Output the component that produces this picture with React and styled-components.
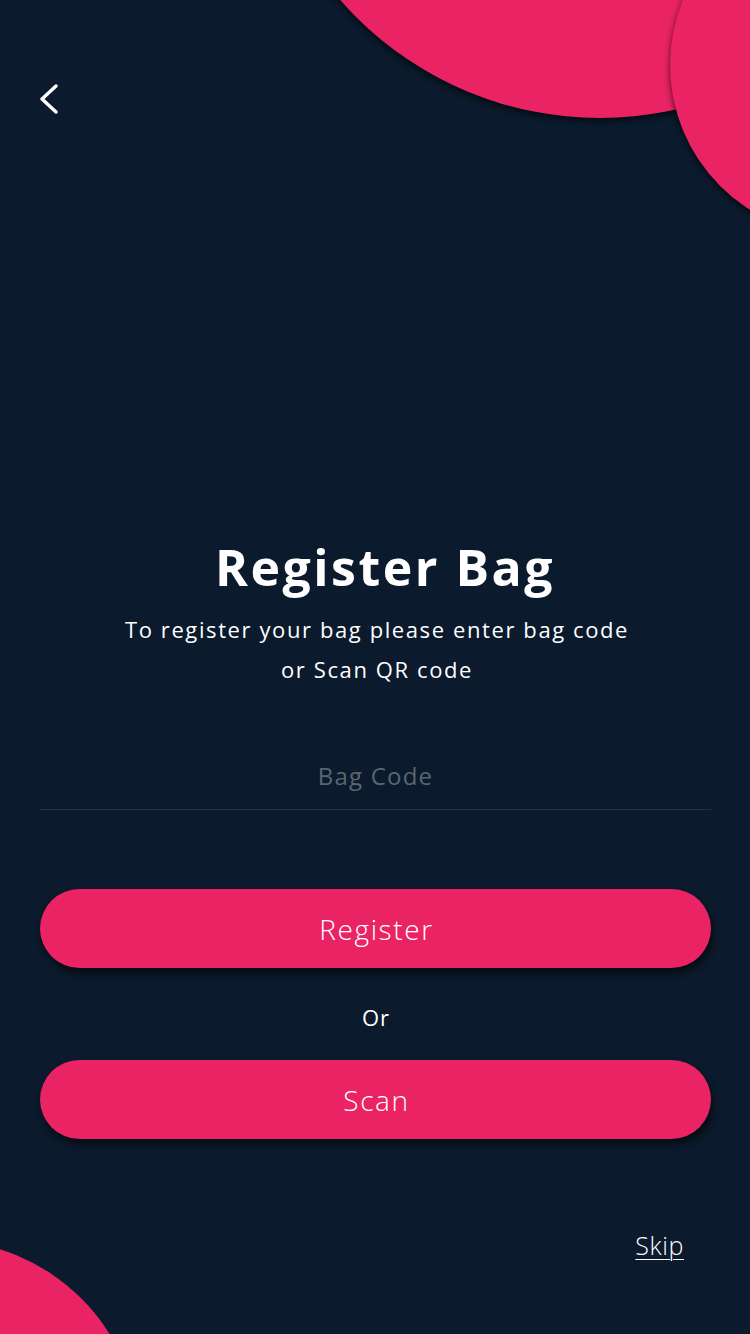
import React from 'react';
import styled, { createGlobalStyle } from 'styled-components';

const GlobalStyle = createGlobalStyle`
  html, body {
    margin: 0;
    padding: 0;
    background: #0b1a2c;
  }
  * {
    box-sizing: border-box;
  }
`;

const Page = styled.div`
  position: relative;
  width: 750px;
  height: 1334px;
  overflow: hidden;
  background: #0b1a2c;
  font-family: 'Open Sans', 'Liberation Sans', sans-serif;
  color: #fff;
  display: flex;
  flex-direction: column;
  padding: 0 39px 0 40px;
`;

const Blob = styled.div`
  position: absolute;
  border-radius: 50%;
  background: #ea2364;
  box-shadow: ${(p) => (p.$flat ? 'none' : '0 3px 6px rgba(0, 0, 0, 0.65)')};
  left: ${(p) => p.$x - p.$r}px;
  top: ${(p) => p.$y - p.$r}px;
  width: ${(p) => p.$r * 2}px;
  height: ${(p) => p.$r * 2}px;
`;

const Header = styled.header`
  position: relative;
  z-index: 2;
  padding-top: 82px;
`;

const BackButton = styled.button`
  width: 30px;
  height: 34px;
  padding: 0;
  border: none;
  background: none;
  cursor: pointer;
  display: flex;
  align-items: center;
  svg {
    display: block;
  }
`;

const Main = styled.main`
  position: relative;
  z-index: 2;
  display: flex;
  flex-direction: column;
  align-items: stretch;
  margin-top: 417px;
`;

const Title = styled.h1`
  margin: 0;
  text-align: center;
  font-size: 50px;
  line-height: 68px;
  font-weight: 700;
  letter-spacing: 2.5px;
  padding-left: 19px;
`;

const Subtitle = styled.p`
  margin: 8px 0 0;
  text-align: center;
  font-size: 22px;
  line-height: 40px;
  font-weight: 500;
  letter-spacing: 1.6px;
  padding-left: 3px;
`;

const CodeInput = styled.input`
  margin-top: 59px;
  height: 62px;
  width: 100%;
  border: none;
  border-bottom: 1px solid #233142;
  background: transparent;
  color: #fff;
  text-align: center;
  font-family: inherit;
  font-size: 24px;
  letter-spacing: 1.2px;
  outline: none;
  padding: 0 0 6px;
  &::placeholder {
    color: #5b6571;
  }
`;

const PillButton = styled.button`
  margin-top: ${(p) => p.$gap}px;
  height: 79px;
  width: 100%;
  border: none;
  border-radius: 40px;
  background: #ea2364;
  color: #fff;
  font-family: inherit;
  font-size: 28px;
  font-weight: 300;
  letter-spacing: 1.6px;
  padding-left: 8px;
  box-shadow: 2px 5px 7px rgba(0, 0, 0, 0.6);
  cursor: pointer;
`;

const OrText = styled.div`
  margin-top: 29px;
  text-align: center;
  font-size: 22px;
  line-height: 40px;
  letter-spacing: 1px;
  padding-left: 1px;
`;

const SkipRow = styled.div`
  margin-top: 91px;
  display: flex;
  justify-content: flex-end;
  padding-right: 27px;
`;

const SkipLink = styled.a`
  color: #fff;
  font-size: 25px;
  font-weight: 300;
  line-height: 30px;
  letter-spacing: 0.6px;
  text-decoration: underline;
  text-underline-offset: 4px;
  text-decoration-thickness: 1px;
  cursor: pointer;
`;

export default function App() {
  return (
    <>
      <GlobalStyle />
      <Page>
        <Blob $x={600} $y={-227} $r={345} />
        <Blob $x={841} $y={65} $r={171} />
        <Blob $x={-60} $y={1440} $r={200} $flat />
        <Header>
          <BackButton aria-label="Back">
            <svg width="30" height="34" viewBox="0 0 30 34">
              <path d="M16 4 L2 17 L16 30" fill="none" stroke="#fff" strokeWidth="3.4" strokeLinecap="round" strokeLinejoin="round" />
            </svg>
          </BackButton>
        </Header>
        <Main>
          <Title>Register Bag</Title>
          <Subtitle>
            To register your bag please enter bag code
            <br />
            or Scan QR code
          </Subtitle>
          <CodeInput placeholder="Bag Code" />
          <PillButton $gap={79}>Register</PillButton>
          <OrText>Or</OrText>
          <PillButton $gap={23}>Scan</PillButton>
          <SkipRow>
            <SkipLink>Skip</SkipLink>
          </SkipRow>
        </Main>
      </Page>
    </>
  );
}
